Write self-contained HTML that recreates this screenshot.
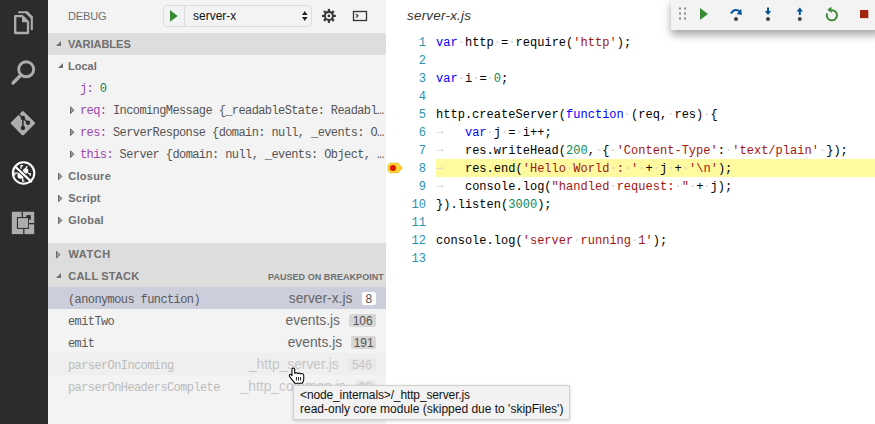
<!DOCTYPE html>
<html><head><meta charset="utf-8">
<style>
*{margin:0;padding:0;box-sizing:border-box}
html,body{width:875px;height:424px;overflow:hidden;background:#fff;font-family:"Liberation Sans",sans-serif}
.abs{position:absolute}
#act{left:0;top:0;width:48px;height:424px;background:#2c2c2c}
#side{left:48px;top:0;width:338px;height:424px;background:#f3f3f3;overflow:hidden}
#editor{left:386px;top:0;width:489px;height:424px;background:#fff;overflow:hidden}
.t{position:absolute;white-space:pre;line-height:1}
.hdr{position:absolute;left:0;width:338px;height:22px;background:#dddddd}
.hb{font-weight:bold;font-size:11px;color:#6f6f6f}
.mono{font-family:"Liberation Mono",monospace;letter-spacing:-0.6px}
.tri-d{position:absolute;width:0;height:0;border-style:solid}
.row{position:absolute;left:0;width:338px;height:22px}
.code{position:absolute;left:50px;font-family:"Liberation Mono",monospace;font-size:12px;white-space:pre;line-height:18px;height:18px;letter-spacing:0.022px}
.ln{position:absolute;left:0;width:40px;text-align:right;font-family:"Liberation Mono",monospace;font-size:12px;color:#2b91af;line-height:18px}
.ar{position:relative;top:-2px}
.k{color:#0000ff}.s{color:#a31515}.n{color:#09885a}.w{color:#d0d0d0}
.csr{position:absolute;right:10px;height:22px;display:flex;align-items:center;white-space:pre}
.fn{font-size:13.8px;line-height:22px;margin-right:9.3px;position:relative;top:1px}
.bd{display:inline-block;height:13px;line-height:14px;font-size:12px;text-align:center;border-radius:2px}
.badge{position:absolute;height:12px;border-radius:2px;font-size:12px;line-height:12px;padding:0 3px;color:#555}
</style></head><body>
<!-- activity bar -->
<div id="act" class="abs">
<svg width="48" height="424" viewBox="0 0 48 424">
 <!-- files -->
 <path d="M15.2 16.2 H22.5 L28 21.7 V33 H15.2 Z" fill="none" stroke="#adadad" stroke-width="2.3" stroke-linejoin="round"/>
 <path d="M22 15.5 V22.2 H28.7 Z" fill="#adadad"/>
 <path d="M18.2 12.2 H26 L31.8 18 V30" fill="none" stroke="#adadad" stroke-width="2.1" stroke-linejoin="round"/>
 <path d="M25.5 11.2 L32.8 18.5 V16.5 L27.5 11.2 Z" fill="#adadad"/>
 <!-- search -->
 <circle cx="26.2" cy="69.3" r="7.5" fill="none" stroke="#adadad" stroke-width="2.9"/>
 <line x1="13" y1="83" x2="20" y2="76" stroke="#adadad" stroke-width="3.3" stroke-linecap="round"/>
 <!-- git -->
 <path d="M22.9 112.3 L33.8 123.2 L22.9 134.1 L12 123.2 Z" fill="#adadad" stroke="#adadad" stroke-width="2.6" stroke-linejoin="round"/>
 <path d="M19 114.3 L22.9 118.2 V128 M22.9 118 L28 122.8" fill="none" stroke="#2c2c2c" stroke-width="1.5"/>
 <circle cx="22.9" cy="118" r="2.2" fill="#2c2c2c"/>
 <circle cx="28" cy="122.8" r="2.2" fill="#2c2c2c"/>
 <circle cx="22.9" cy="128" r="2.2" fill="#2c2c2c"/>
 <!-- debug -->
 <g transform="translate(12,162) scale(0.0566)">
  <g fill="#fff">
   <circle cx="148" cy="242" r="52"/>
   <circle cx="242" cy="160" r="48"/>
  </g>
  <g fill="none" stroke="#fff" stroke-width="22" stroke-linecap="butt">
   <path d="M48 240 V195 H115"/>
   <path d="M190 262 V338 H220"/>
   <path d="M160 120 V64 H195"/>
   <path d="M268 70 L238 128"/>
   <path d="M285 205 H322 V245"/>
  </g>
  <line x1="50" y1="75" x2="350" y2="355" stroke="#2c2c2c" stroke-width="70"/>
  <line x1="50" y1="75" x2="350" y2="355" stroke="#fff" stroke-width="40"/>
  <circle cx="205" cy="195" r="190" fill="none" stroke="#fff" stroke-width="36"/>
 </g>
 <!-- extensions -->
 <rect x="11.84" y="211.76" width="22.36" height="22.36" fill="#adadad"/>
 <rect x="21.65" y="211.76" width="1.25" height="6" fill="#2c2c2c"/>
 <rect x="23.2" y="228.4" width="1.2" height="5.8" fill="#2c2c2c"/>
 <rect x="28.5" y="223" width="5.8" height="1.3" fill="#2c2c2c"/>
 <rect x="26.4" y="215.1" width="4.4" height="4.6" fill="#2c2c2c"/>
 <rect x="16.9" y="217" width="12.1" height="11.9" fill="#2c2c2c"/>
 <rect x="18" y="218.1" width="10.1" height="9.8" fill="#adadad"/>
</svg>
</div>

<!-- sidebar -->
<div id="side" class="abs">
 <div class="t" style="left:20px;top:11px;font-size:11px;letter-spacing:-0.15px;color:#6f6f6f">DEBUG</div>
 <div class="abs" style="left:115px;top:5px;width:149px;height:22px;border:1px solid #dcdcdc;border-radius:4px;background:#f3f3f3"></div>
 <div class="abs" style="left:136px;top:6px;width:1px;height:20px;background:#dcdcdc"></div>
 <svg class="abs" style="left:0;top:0" width="338" height="33">
  <path d="M122 10 L129.7 15.9 L122 21.7 Z" fill="#388a34"/>
  <path d="M254 15 L256.8 10.9 L259.5 15 Z M254 17 L256.8 21.1 L259.5 17 Z" fill="#222"/>
  <g transform="translate(280.9,15.9)" fill="#3a3a3a">
   <circle r="5.1"/><rect x="-1.1" y="-7" width="2.2" height="3.5" transform="rotate(0)"/><rect x="-1.1" y="-7" width="2.2" height="3.5" transform="rotate(45)"/><rect x="-1.1" y="-7" width="2.2" height="3.5" transform="rotate(90)"/><rect x="-1.1" y="-7" width="2.2" height="3.5" transform="rotate(135)"/><rect x="-1.1" y="-7" width="2.2" height="3.5" transform="rotate(180)"/><rect x="-1.1" y="-7" width="2.2" height="3.5" transform="rotate(225)"/><rect x="-1.1" y="-7" width="2.2" height="3.5" transform="rotate(270)"/><rect x="-1.1" y="-7" width="2.2" height="3.5" transform="rotate(315)"/>
   <circle r="3" fill="#f3f3f3"/><circle r="1.4"/>
  </g>
  <rect x="305.5" y="11.5" width="13" height="9" fill="none" stroke="#333" stroke-width="1.3"/>
  <path d="M308 14 l2 1.8 l-2 1.8" fill="none" stroke="#333" stroke-width="1.1"/>
 </svg>
 <div class="t" style="left:145px;top:10px;font-size:12px;color:#111">server-x</div>

 <div class="hdr" style="top:33px"></div>
 <div class="tri-d" style="left:8px;top:41px;border-width:0 0 5px 5px;border-color:transparent transparent #6f6f6f transparent"></div>
 <div class="t hb" style="left:20px;top:39px">VARIABLES</div>

 <div class="tri-d" style="left:10px;top:63px;border-width:0 0 5px 5px;border-color:transparent transparent #6f6f6f transparent"></div>
 <div class="t hb" style="left:20px;top:61px">Local</div>
 <div class="t mono" style="left:32px;top:83px;font-size:12px"><span style="color:#9b46b0">j:</span> <span style="color:#09885a">0</span></div>
 <div class="t mono" style="left:32px;top:105px;font-size:12px;color:#555"><span style="color:#9b46b0">req:</span> IncomingMessage {_readableState: Readabl…</div>
 <div class="t mono" style="left:32px;top:127px;font-size:12px;color:#555"><span style="color:#9b46b0">res:</span> ServerResponse {domain: null, _events: O…</div>
 <div class="t mono" style="left:32px;top:149px;font-size:12px;color:#555"><span style="color:#9b46b0">this:</span> Server {domain: null, _events: Object, …</div>
 <div class="t hb" style="left:20.3px;top:171px;letter-spacing:0.25px">Closure</div>
 <div class="t hb" style="left:20.3px;top:193px;letter-spacing:0.2px">Script</div>
 <div class="t hb" style="left:20.3px;top:215px;letter-spacing:0.2px">Global</div>

 <div class="hdr" style="top:243px;height:44px"></div>
 <div class="t hb" style="left:20.5px;top:249px;letter-spacing:0.55px">WATCH</div>
 <div class="tri-d" style="left:8px;top:273px;border-width:0 0 5px 5px;border-color:transparent transparent #6f6f6f transparent"></div>
 <div class="t hb" style="left:20.3px;top:271px;letter-spacing:0.17px">CALL STACK</div>
 <div class="t hb" style="left:220px;top:273px;font-size:9px;letter-spacing:0.05px">PAUSED ON BREAKPOINT</div>

 <div class="row" style="top:287px;background:#cccedb"></div>
 <div class="t mono" style="left:20px;top:294px;font-size:12px;color:#5a5a5a">(anonymous function)</div>
 <div class="t mono" style="left:20px;top:316px;font-size:12px;color:#5a5a5a">emitTwo</div>
 <div class="t mono" style="left:20px;top:338px;font-size:12px;color:#5a5a5a">emit</div>
 <div class="row" style="top:353px;background:#efefef"></div>
 <div class="t mono" style="left:20px;top:360px;font-size:12px;color:#bbb">parserOnIncoming</div>
 <div class="t mono" style="left:20px;top:382px;font-size:12px;color:#bbb">parserOnHeadersComplete</div>

 <div class="csr" style="top:287px"><span class="fn" style="color:#666">server-x.js</span><span class="bd" style="width:14.3px;background:#fff;color:#555">8</span></div>
 <div class="csr" style="top:309px"><span class="fn" style="color:#666">events.js</span><span class="bd" style="width:26.7px;background:#d6d6d6;color:#555">106</span></div>
 <div class="csr" style="top:331px"><span class="fn" style="color:#666">events.js</span><span class="bd" style="width:24.6px;background:#d6d6d6;color:#555">191</span></div>
 <div class="csr" style="top:353px"><span class="fn" style="color:#c6c6c6">_http_server.js</span><span class="bd" style="width:28.1px;background:#e9e9e9;color:#c6c6c6">546</span></div>
 <div class="csr" style="top:375px"><span class="fn" style="color:#c6c6c6">_http_common.js</span><span class="bd" style="width:21px;background:#e9e9e9;color:#c6c6c6">99</span></div>
 <!-- collapsed triangles -->
 <svg class="abs" style="left:-48px;top:0" width="386" height="424"><g fill="#9a9a9a" stroke="#6a6a6a" stroke-width="1" stroke-linejoin="miter"><path d="M70.5 106.8 L73.9 110.2 L70.5 113.60000000000001 Z"/><path d="M70.5 128.79999999999998 L73.9 132.2 L70.5 135.6 Z"/><path d="M70.5 150.79999999999998 L73.9 154.2 L70.5 157.6 Z"/><path d="M58.5 173.0 L61.9 176.4 L58.5 179.8 Z"/><path d="M58.5 195.0 L61.9 198.4 L58.5 201.8 Z"/><path d="M58.5 217.0 L61.9 220.4 L58.5 223.8 Z"/><path d="M56.5 251.29999999999998 L59.9 254.7 L56.5 258.09999999999997 Z"/></g></svg>
</div>

<!-- editor -->
<div id="editor" class="abs">
 <div class="t" style="left:21px;top:9px;font-size:13.4px;letter-spacing:0.25px;font-style:italic;color:#333">server-x.js</div>
 <div class="abs" style="left:50px;top:159px;width:439px;height:18px;background:#fefaa0"></div>

 <!-- breakpoint glyph -->
 <svg class="abs" style="left:0;top:159px" width="24" height="18">
  <path d="M4.1 4 H11.9 L16.6 8.95 L11.9 13.9 H4.1 L1.8 11.3 V6.6 Z" fill="#fdd332" stroke="#e9b52a" stroke-width="0.6" stroke-linejoin="round"/>
  <circle cx="7" cy="9" r="3" fill="#e51400"/>
 </svg>
 <!-- debug toolbar -->
 <div class="abs" style="left:285px;top:-2px;width:210px;height:32px;background:#f3f3f3;box-shadow:0 5px 8px #a8a8a8"></div>
 <svg class="abs" style="left:285px;top:0" width="204" height="30">
  <g fill="#8a8a8a"><rect x="8" y="7.5" width="2" height="2"/><rect x="13" y="7.5" width="2" height="2"/><rect x="8" y="12.5" width="2" height="2"/><rect x="13" y="12.5" width="2" height="2"/><rect x="8" y="17.5" width="2" height="2"/><rect x="13" y="17.5" width="2" height="2"/></g>
  <path d="M29 8 L37 14 L29 20 Z" fill="#388a34"/>
  <path d="M60 13.5 Q63.5 7.5 69 11.5" fill="none" stroke="#00539c" stroke-width="2"/>
  <path d="M70 8.8 L71 14.8 L65.8 14.2 Z" fill="#00539c"/>
  <circle cx="65" cy="18.9" r="2" fill="#424242"/>
  <path d="M97 7.5 V12.5" stroke="#00539c" stroke-width="2"/>
  <path d="M93.8 11 L97 15 L100.2 11 Z" fill="#00539c"/>
  <circle cx="97" cy="18.9" r="2" fill="#424242"/>
  <path d="M128.8 15 V10" stroke="#00539c" stroke-width="2"/>
  <path d="M125.6 11.5 L128.8 7.5 L132 11.5 Z" fill="#00539c"/>
  <circle cx="128.8" cy="18.9" r="2" fill="#424242"/>
  <path d="M160.5 10.2 A5.1 5.1 0 1 1 156.2 13.3" fill="none" stroke="#388a34" stroke-width="1.9"/>
  <path d="M156.3 9.8 L160.3 6.8 L160.9 13 Z" fill="#388a34"/>
  <rect x="189" y="10" width="8.3" height="8.1" fill="#a1260d"/>
 </svg>
 <div class="ln" style="top:34px">1</div>
 <div class="code" style="top:34px"><span class="k">var</span><span class="w">·</span>http<span class="w">·</span>=<span class="w">·</span>require(<span class="s">&#x27;http&#x27;</span>);</div>
 <div class="ln" style="top:52px">2</div>
 <div class="ln" style="top:70px">3</div>
 <div class="code" style="top:70px"><span class="k">var</span><span class="w">·</span>i<span class="w">·</span>=<span class="w">·</span><span class="n">0</span>;</div>
 <div class="ln" style="top:88px">4</div>
 <div class="ln" style="top:106px">5</div>
 <div class="code" style="top:106px">http.createServer(<span class="k">function</span><span class="w">·</span>(req,<span class="w">·</span>res)<span class="w">·</span>{</div>
 <div class="ln" style="top:124px">6</div>
 <div class="code" style="top:124px"><span class="w ar">→</span>   <span class="k">var</span><span class="w">·</span>j<span class="w">·</span>=<span class="w">·</span>i++;</div>
 <div class="ln" style="top:142px">7</div>
 <div class="code" style="top:142px"><span class="w ar">→</span>   res.writeHead(<span class="n">200</span>,<span class="w">·</span>{<span class="w">·</span><span class="s">&#x27;Content-Type&#x27;</span>:<span class="w">·</span><span class="s">&#x27;text/plain&#x27;</span><span class="w">·</span>});</div>
 <div class="ln" style="top:160px">8</div>
 <div class="code" style="top:160px"><span class="w ar">→</span>   res.end(<span class="s">&#x27;Hello</span><span class="w">·</span><span class="s">World</span><span class="w">·</span><span class="s">:</span><span class="w">·</span><span class="s">&#x27;</span><span class="w">·</span>+<span class="w">·</span>j<span class="w">·</span>+<span class="w">·</span><span class="s">&#x27;\n&#x27;</span>);</div>
 <div class="ln" style="top:178px">9</div>
 <div class="code" style="top:178px"><span class="w ar">→</span>   console.log(<span class="s">&quot;handled</span><span class="w">·</span><span class="s">request:</span><span class="w">·</span><span class="s">&quot;</span><span class="w">·</span>+<span class="w">·</span>j);</div>
 <div class="ln" style="top:196px">10</div>
 <div class="code" style="top:196px">}).listen(<span class="n">3000</span>);</div>
 <div class="ln" style="top:214px">11</div>
 <div class="ln" style="top:232px">12</div>
 <div class="code" style="top:232px">console.log(<span class="s">&#x27;server</span><span class="w">·</span><span class="s">running</span><span class="w">·</span><span class="s">1&#x27;</span>);</div>
 <div class="ln" style="top:250px">13</div>
</div>

<!-- tooltip -->
<div class="abs" style="left:293px;top:385px;width:277px;height:35px;background:#f2f2f2;border:1px solid #d0d0d0;box-shadow:0 1px 3px rgba(0,0,0,0.18)"></div>
<div class="t" style="left:300px;top:388px;font-size:12px;color:#111;line-height:14px"><span style="letter-spacing:-0.13px">&lt;node_internals&gt;/_http_server.js</span><br>read-only core module (skipped due to 'skipFiles')</div>

<!-- hand cursor -->
<svg class="abs" style="left:284px;top:362px" width="26" height="26" viewBox="0 0 424 424">
 <path d="M130 225 V122 Q130 98 152 98 Q175 98 175 122 V188 Q180 172 200 174 Q220 177 222 192 Q226 176 246 179 Q266 182 266 197 Q272 186 292 189 Q322 194 322 217 V285 Q320 320 292 348 H178 L92 238 Q78 214 98 204 Q118 196 130 225 Z" fill="#fff" stroke="#000" stroke-width="17" stroke-linejoin="round"/>
 <path d="M203 245 V302 M237 245 V302 M271 245 V302" stroke="#000" stroke-width="14"/>
</svg>
</body></html>
